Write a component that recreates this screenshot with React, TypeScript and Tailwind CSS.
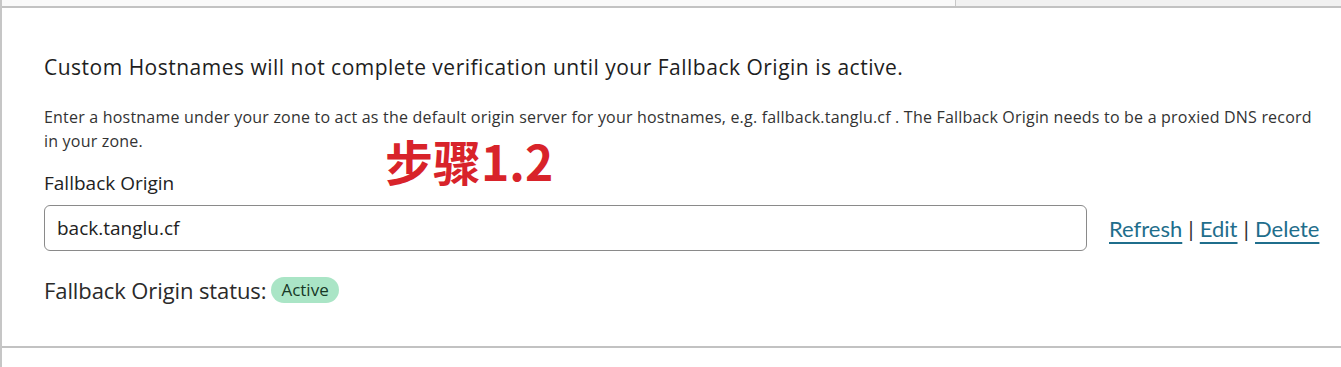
import React from 'react'

function ActionLinks() {
  const links = ['Refresh', 'Edit', 'Delete']
  return (
    <div className="flex items-center gap-[6px] font-['Lato',sans-serif] text-[22px] text-[#1f6e8c]">
      {links.map((label, idx) => (
        <React.Fragment key={label}>
          {idx > 0 && <span className="text-[#333]">|</span>}
          <a href="#" className="underline decoration-2 underline-offset-[5px]">
            {label}
          </a>
        </React.Fragment>
      ))}
    </div>
  )
}

export default function App() {
  return (
    <div className="relative h-[367px] w-[1341px] overflow-hidden border-l-2 border-[#c6c6c6] bg-white font-['Open_Sans',sans-serif]">
      {/* top strip */}
      <div className="flex h-[8px] border-b-2 border-[#c2c2c2]">
        <div className="flex-1 bg-[#f9f9f9]" />
        <div className="w-[386px] border-l border-[#c8c8c8] bg-[#f1f1f1]" />
      </div>

      <div className="border-b-2 border-[#c2c2c2] pb-[41px] pl-[42px] pr-[20px] pt-[45px]">
        <p className="text-[21px] leading-[28px] tracking-[0.5px] text-[#1e1e1e]">
          Custom Hostnames will not complete verification until your Fallback Origin is active.
        </p>

        <p className="mt-[24px] max-w-[1285px] text-[16px] leading-[24px] tracking-[0.2px] text-[#333]">
          Enter a hostname under your zone to act as the default origin server for your hostnames, e.g. fallback.tanglu.cf . The Fallback Origin needs to be a proxied DNS record in your zone.
        </p>

        <p className="mt-[17px] text-[19px] leading-[26px] text-[#222]">Fallback Origin</p>

        <div className="mt-[9px] flex items-center gap-[22px]">
          <div className="flex h-[46px] w-[1043px] items-center rounded-[6px] border border-[#8a8a8a] px-[12px] text-[19px] text-[#222]">
            back.tanglu.cf
          </div>
          <ActionLinks />
        </div>

        <div className="mt-[24px] flex items-center gap-[5px]">
          <span className="text-[22px] leading-[30px] tracking-[-0.1px] text-[#2a2a2a]">Fallback Origin status:</span>
          <span className="rounded-full bg-[#aae5c6] px-[10px] py-[1px] text-[17px] leading-[24px] text-[#173826]">
            Active
          </span>
        </div>
      </div>

      <div className="absolute left-[383px] top-[132px] font-['Noto_Sans_CJK_SC',sans-serif] text-[48px] font-bold leading-[56px] text-[#d8232a]">
        步骤1.2
      </div>
    </div>
  )
}
